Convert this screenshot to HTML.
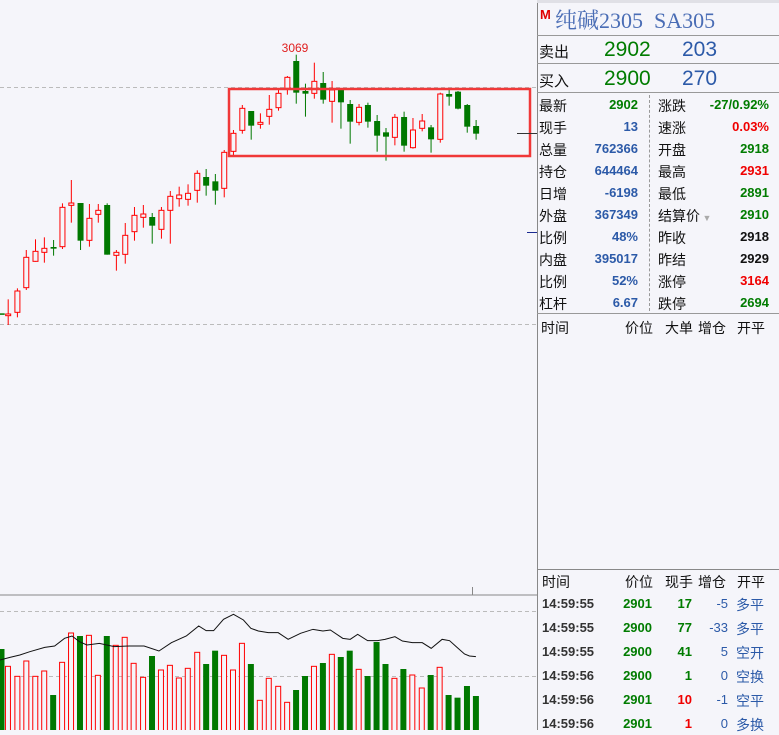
<!DOCTYPE html>
<html><head><meta charset="utf-8"><style>
body{margin:0;width:779px;height:730px;overflow:hidden;background:#f5f5fa;font-family:"Liberation Sans","Noto Sans CJK SC",sans-serif;position:relative}
.a{position:absolute;white-space:nowrap}
.g{color:#007c00}.b{color:#2c5aa8}.r{color:#f00000}.k{color:#111}
.v{font-weight:bold;font-size:13px;text-align:right}
.l{font-size:14px;color:#111}
</style></head><body>
<svg id="c" width="537" height="730" style="position:absolute;left:0;top:0"></svg>
<div class="a" style="left:537px;top:0;width:1px;height:730px;background:#888"></div>
<div class="a" style="left:537px;top:0;width:242px;height:3px;background:#e0e0e6"></div>
<div class="a" style="left:540px;top:7px;color:#e00000;font-weight:bold;font-size:13px">M</div>
<div class="a" style="left:555px;top:4px;color:#4a6db5;font-size:22px;font-family:'Liberation Serif','Noto Serif CJK SC',serif">纯碱2305&nbsp; SA305</div>
<div class="a" style="left:537px;top:35px;width:242px;height:1px;background:#999"></div>
<div class="a" style="left:537px;top:63px;width:242px;height:1px;background:#999"></div>
<div class="a" style="left:537px;top:92px;width:242px;height:1px;background:#999"></div>
<div class="a l" style="left:539px;top:41px;font-size:15px">卖出</div>
<div class="a g" style="left:604px;top:38px;font-size:21px">2902</div>
<div class="a b" style="left:682px;top:38px;font-size:21px">203</div>
<div class="a l" style="left:539px;top:70px;font-size:15px">买入</div>
<div class="a g" style="left:604px;top:67px;font-size:21px">2900</div>
<div class="a b" style="left:682px;top:67px;font-size:21px">270</div>
<div class="a" style="left:649px;top:95px;height:216px;border-left:1px dashed #999"></div>
<div id="st"></div>
<div class="a" style="left:537px;top:313px;width:242px;height:1px;background:#999"></div>
<div class="a l" style="left:541px;top:318px">时间</div>
<div class="a l" style="left:625px;top:318px">价位</div>
<div class="a l" style="left:665px;top:318px">大单</div>
<div class="a l" style="left:698px;top:318px">增仓</div>
<div class="a l" style="left:737px;top:318px">开平</div>
<div class="a" style="left:537px;top:569px;width:242px;height:1px;background:#888"></div>
<div class="a l" style="left:542px;top:572px">时间</div>
<div class="a l" style="left:625px;top:572px">价位</div>
<div class="a l" style="left:665px;top:572px">现手</div>
<div class="a l" style="left:698px;top:572px">增仓</div>
<div class="a l" style="left:737px;top:572px">开平</div>
<div id="tr"></div>
<script>
var S='<line x1="0" y1="87.5" x2="537" y2="87.5" stroke="#bbb" stroke-dasharray="4,3"/><line x1="0" y1="324.5" x2="537" y2="324.5" stroke="#bbb" stroke-dasharray="4,3"/>';
var C=[[5,820,820,820,820,0],[24,778,822,827,855,1],[51,745,753,817,832,1],[77,630,652,743,750,1],[104,598,634,664,665,1],[130,592,625,637,668,1],[157,600,621,626,647,0],[183,490,502,620,627,1],[209,420,489,496,548,1],[236,489,489,602,630,0],[262,492,535,601,620,1],[288,492,511,523,548,1],[314,490,495,644,644,0],[341,630,637,646,692,1],[367,549,586,643,671,1],[394,501,526,575,602,1],[420,495,522,532,563,1],[446,519,531,557,611,0],[473,501,511,568,596,1],[499,453,469,511,611,1],[525,440,465,476,500,1],[551,433,460,478,497,1],[578,391,400,451,488,1],[604,387,411,437,467,0],[631,402,424,452,494,0],[657,330,337,445,472,1],[684,270,280,334,345,1],[710,195,205,271,281,1],[736,213,213,257,299,0],[763,220,247,253,266,1],[789,165,208,229,254,1],[816,150,160,203,212,1],[842,108,112,145,164,1],[868,44,63,158,191,0],[895,131,153,161,230,0],[921,68,124,160,176,1],[947,96,129,179,191,0],[973,123,150,184,248,1],[999,145,145,187,266,0],[1026,180,192,245,311,0],[1052,192,202,247,256,1],[1078,188,195,245,263,0],[1105,225,243,287,335,0],[1131,264,277,290,362,0],[1157,222,232,292,316,1],[1184,215,231,317,335,0],[1210,234,270,323,326,1],[1237,222,243,265,274,1],[1263,255,262,298,338,0],[1290,158,162,298,308,1],[1316,150,162,170,197,0],[1342,153,155,206,208,0],[1369,192,195,260,278,0],[1395,240,258,281,299,0]];
C.forEach(function(c){var x=c[0]/2.93,f=function(y){return 40+y/3};var col=c[5]?'#f00':'#007800';var t=f(c[2]),b=Math.max(f(c[3]),t+1.5);
S+='<line x1="'+x+'" y1="'+f(c[1])+'" x2="'+x+'" y2="'+f(c[4])+'" stroke="'+col+'" stroke-width="1"/>';
if(c[5])S+='<rect x="'+(x-2.5)+'" y="'+t+'" width="5" height="'+(b-t)+'" fill="#f5f5fa" stroke="#f00" stroke-width="1"/>';
else S+='<rect x="'+(x-3)+'" y="'+t+'" width="6" height="'+(b-t)+'" fill="#007800"/>';});
S+='<text x="295" y="52" fill="#e02020" font-size="12" text-anchor="middle" font-family="Liberation Sans">3069</text>';
S+='<rect x="229" y="89" width="301" height="67" fill="none" stroke="#f03838" stroke-width="2.5"/>';
S+='<line x1="517" y1="133.5" x2="537" y2="133.5" stroke="#333"/><line x1="527" y1="232.5" x2="537" y2="232.5" stroke="#1a2a90"/>';
S+='<line x1="0" y1="595" x2="537" y2="595" stroke="#888"/><line x1="472.5" y1="587" x2="472.5" y2="595" stroke="#888"/>';
S+='<line x1="0" y1="611.5" x2="537" y2="611.5" stroke="#bbb" stroke-dasharray="4,3"/><line x1="0" y1="676.5" x2="537" y2="676.5" stroke="#bbb" stroke-dasharray="4,3"/>';
var V=[[3,237,0],[16,289,1],[35,319,1],[53,273,1],[71,319,1],[89,303,1],[107,375,0],[125,277,1],[143,189,1],[161,198,0],[179,196,1],[197,316,1],[215,198,0],[233,226,1],[251,202,1],[269,280,1],[288,322,1],[306,258,0],[324,300,1],[342,286,1],[360,324,1],[378,295,1],[397,247,1],[415,282,0],[433,242,0],[451,256,1],[469,300,1],[487,220,1],[505,282,0],[523,391,1],[541,325,1],[560,349,1],[578,397,1],[596,360,0],[614,318,0],[632,289,1],[650,279,0],[668,253,1],[686,261,0],[704,242,0],[722,298,1],[740,318,0],[758,216,0],[776,282,0],[794,325,1],[812,297,0],[830,315,1],[849,354,1],[867,315,0],[885,292,1],[903,375,0],[921,383,0],[940,348,0],[958,378,0]];
V.forEach(function(v){var x=v[0]/2.013,t=570+v[1]/3;
if(v[2])S+='<rect x="'+(x-2.5)+'" y="'+t+'" width="5" height="'+(731-t)+'" fill="#f5f5fa" stroke="#f00"/>';
else S+='<rect x="'+(x-3)+'" y="'+t+'" width="6" height="'+(731-t)+'" fill="#007800"/>';});
var M=[[0,270],[20,262],[40,255],[60,245],[90,232],[110,228],[130,205],[145,198],[160,215],[175,225],[200,220],[230,230],[260,228],[290,228],[320,243],[345,218],[375,198],[400,168],[415,182],[430,182],[450,148],[470,133],[490,150],[505,175],[520,183],[540,188],[560,188],[580,208],[605,190],[630,178],[650,183],[665,180],[690,205],[705,208],[720,193],[740,212],[760,212],[775,208],[795,200],[810,213],[830,218],[850,218],[868,235],[890,208],[905,212],[920,232],[935,252],[945,258],[958,260]];
S+='<polyline fill="none" stroke="#111" stroke-width="1" points="'+M.map(function(p){return (p[0]/2.013)+','+(570+p[1]/3)}).join(' ')+'"/>';
document.getElementById('c').innerHTML=S;
var R=[['最新','2902','g','涨跌','-27/0.92%','g'],['现手','13','b','速涨','0.03%','r'],['总量','762366','b','开盘','2918','g'],['持仓','644464','b','最高','2931','r'],['日增','-6198','b','最低','2891','g'],['外盘','367349','b','结算价','2910','g'],['比例','48%','b','昨收','2918','k'],['内盘','395017','b','昨结','2929','k'],['比例','52%','b','涨停','3164','r'],['杠杆','6.67','b','跌停','2694','g']];
var H='';R.forEach(function(r,i){var y=96+i*22;
H+='<div class="a l" style="left:539px;top:'+y+'px">'+r[0]+'</div><div class="a v '+r[2]+'" style="left:580px;width:58px;top:'+(y+1)+'px">'+r[1]+'</div><div class="a l" style="left:658px;top:'+y+'px">'+r[3]+(i==5?'<span style="color:#aaa;font-size:9px"> ▼</span>':'')+'</div><div class="a v '+r[5]+'" style="left:690px;width:79px;top:'+(y+1)+'px">'+r[4]+'</div>';});
document.getElementById('st').innerHTML=H;
var T=[['14:59:55','2901','17','g','-5','多平'],['14:59:55','2900','77','g','-33','多平'],['14:59:55','2900','41','g','5','空开'],['14:59:56','2900','1','g','0','空换'],['14:59:56','2901','10','r','-1','空平'],['14:59:56','2901','1','r','0','多换']];
H='';T.forEach(function(t,i){var y=596+i*24;
H+='<div class="a v" style="left:542px;top:'+y+'px;color:#333;text-align:left">'+t[0]+'</div><div class="a v g" style="left:612px;width:40px;top:'+y+'px">'+t[1]+'</div><div class="a v '+t[3]+'" style="left:660px;width:32px;top:'+y+'px">'+t[2]+'</div><div class="a b" style="left:700px;width:28px;text-align:right;font-size:13px;top:'+y+'px">'+t[4]+'</div><div class="a b" style="left:736px;font-size:14px;top:'+(y-1)+'px">'+t[5]+'</div>';});
document.getElementById('tr').innerHTML=H;
</script>
</body></html>
